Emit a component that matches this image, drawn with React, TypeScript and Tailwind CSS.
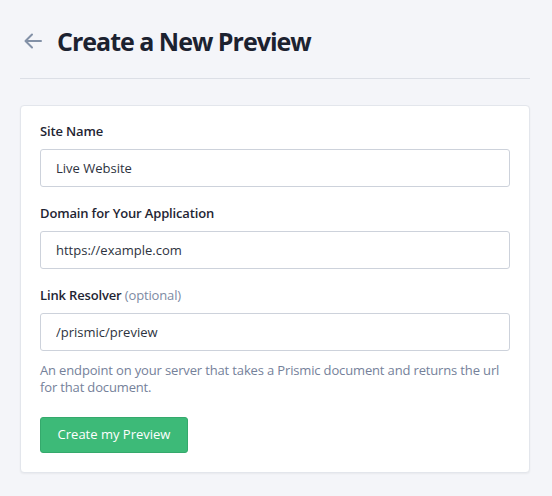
import React from "react";

const font = { fontFamily: "'Open Sans', 'Noto Sans', sans-serif" };

function Field({ label, optional, value }: { label: string; optional?: boolean; value: string }) {
  return (
    <div className="flex flex-col">
      <label className="text-[13px] font-semibold text-[#1f2533] leading-[18px] mb-[9px] tracking-[-0.15px]">
        {label}
        {optional && <span className="font-normal text-[#7d8aa3]"> (optional)</span>}
      </label>
      <input
        readOnly
        value={value}
        className="h-[38px] w-full rounded-[3px] border border-[#cdd2db] bg-white px-[15px] text-[13px] text-[#2d3340] outline-none"
        style={font}
      />
    </div>
  );
}

export default function App() {
  return (
    <div className="min-h-[496px] w-full bg-[#f4f5f9] px-[20px] pt-[24px]" style={font}>
      <div className="w-[510px]">
        <div className="flex items-center h-[34px]">
          <svg width="20" height="20" viewBox="0 0 20 20" className="ml-[3px] mr-[14px]" fill="none" stroke="#8391a7" strokeWidth="2" strokeLinecap="round" strokeLinejoin="round">
            <path d="M18 10H3" />
            <path d="M9 3.5L2.5 10L9 16.5" />
          </svg>
          <h1 className="text-[25px] font-bold text-[#1c2230] leading-none tracking-[-1px]">Create a New Preview</h1>
        </div>
        <div className="mt-[20px] h-px bg-[#dcdfe6]" />
        <div className="mt-[26px] rounded-[4px] border border-[#e3e6ec] bg-white px-[19px] pt-[16px] pb-[19px] shadow-[0_1px_2px_rgba(0,0,0,0.05)]">
          <div className="flex flex-col gap-[17px]">
            <Field label="Site Name" value="Live Website" />
            <Field label="Domain for Your Application" value="https://example.com" />
            <div>
              <Field label="Link Resolver" optional value="/prismic/preview" />
              <p className="mt-[11px] text-[13px] leading-[17px] text-[#75819a] tracking-[-0.15px]">
                An endpoint on your server that takes a Prismic document and returns the url for that document.
              </p>
            </div>
          </div>
          <button className="mt-[21px] h-[36px] w-[148px] rounded-[3px] border border-[#35a96c] bg-[#3dba78] text-[13px] text-white">
            Create my Preview
          </button>
        </div>
      </div>
    </div>
  );
}
